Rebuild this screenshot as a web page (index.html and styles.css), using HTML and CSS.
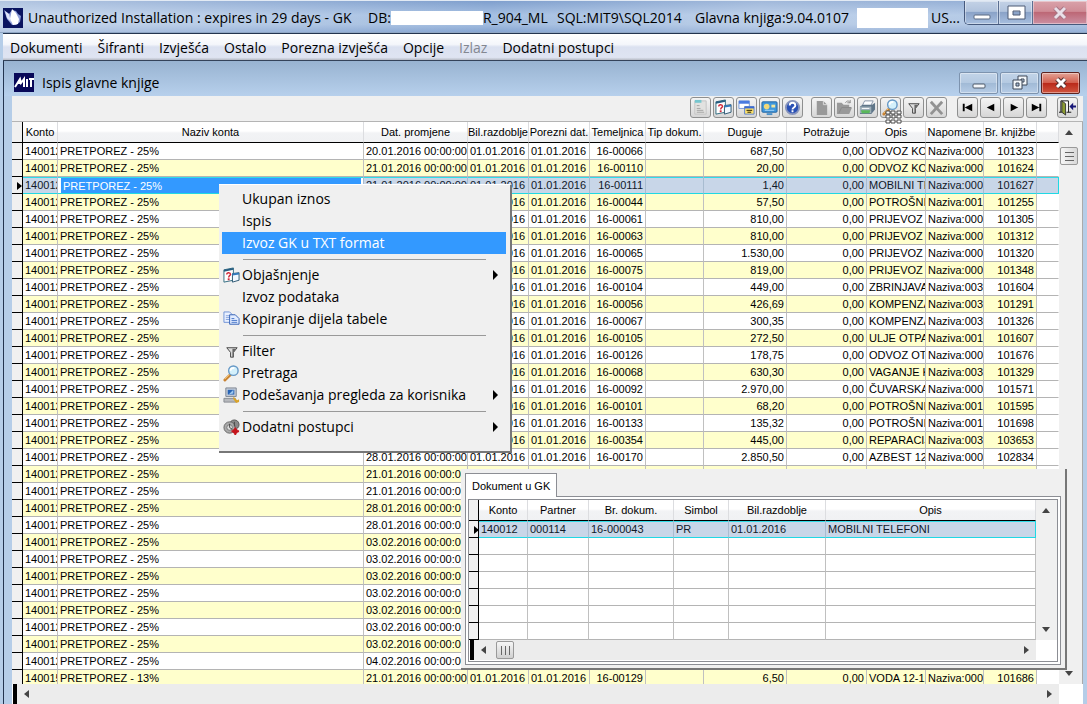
FILE: index.html
```html
<!DOCTYPE html>
<html lang="hr">
<head>
<meta charset="utf-8">
<title>Ispis glavne knjige</title>
<link rel="stylesheet" href="styles.css">
</head>
<body>
<div class="app">
  <header class="titlebar">
    <svg class="app-icon" viewBox="0 0 20 20" aria-hidden="true"><rect width="20" height="20" fill="#0a1460"/><path d="M1 2l5 4 3-4 4 1 2 3 3 2-1 6-4 3H9L4 11z" fill="#8c9cd8"/><path d="M9 1l4 4 3 6-1 5-5 1-3-6 1-5z" fill="#fff"/><path d="M2 3l4 3 2 8-4-4z" fill="#dfe5fa"/></svg>
    <span class="title-main">Unauthorized Installation : expires in 29 days - GK</span>
    <span class="title-db">DB:<i class="mask"></i>R_904_ML</span>
    <span class="title-sql">SQL:MIT9\SQL2014</span>
    <span class="title-ver">Glavna knjiga:9.04.0107</span>
    <i class="mask tall"></i>
    <span class="title-user">US...</span>
    <div class="win-buttons">
      <button aria-label="Minimize"><svg viewBox="0 0 28 18" width="28" height="18"><rect x="6" y="11" width="16" height="4" rx="1" fill="#fff" stroke="#5b6b83"/></svg></button>
      <button aria-label="Maximize"><svg viewBox="0 0 28 18" width="28" height="18"><path d="M6 2h17v13H6zM11 7v4h7V7z" fill="#fff" fill-rule="evenodd" stroke="#4c5b74"/></svg></button>
      <button class="close" aria-label="Close"><svg viewBox="0 0 18 16" width="18" height="16"><path d="M4 3l10 10M14 3L4 13" stroke="#a87686" stroke-width="5"/><path d="M4 3l10 10M14 3L4 13" stroke="#e9dfe8" stroke-width="3"/></svg></button>
    </div>
  </header>
  <nav class="menubar">
    <button>Dokumenti</button><button>Šifranti</button><button>Izvješća</button><button>Ostalo</button><button>Porezna izvješća</button><button>Opcije</button><button disabled>Izlaz</button><button>Dodatni postupci</button>
  </nav>
  <main class="mdi">
    <div class="caption">
      <svg class="mit-icon" viewBox="0 0 20 19" aria-hidden="true"><rect width="20" height="19" fill="#080858"/><path d="M1 14l5-8 1 4 3-4v8M4 10h4M13 6v8M15 6h5M17 6v8" stroke="#fff" stroke-width="2" fill="none"/></svg>
      <h1>Ispis glavne knjige</h1>
      <div class="mdi-buttons">
        <button aria-label="Minimize"><svg viewBox="0 0 16 14" width="16" height="14"><rect x="2" y="8" width="12" height="4" rx="1" fill="#f3f6fa" stroke="#4e5a6b"/></svg></button>
        <button aria-label="Restore"><svg viewBox="0 0 16 16" width="16" height="16"><path d="M6 1h9v9H6z" fill="#f4f7fa" stroke="#3d4756"/><path d="M9 4h3v3H9z" fill="#b8c8dc" stroke="#3d4756"/><path d="M1 5h9v9H1z" fill="#f4f7fa" stroke="#3d4756"/><path d="M4 8h3v3H4z" fill="#a9bdd6" stroke="#3d4756"/></svg></button>
        <button class="close" aria-label="Close"><svg viewBox="0 0 16 14" width="16" height="14"><path d="M4 3l8 8M12 3l-8 8" stroke="#54302f" stroke-width="5"/><path d="M4 3l8 8M12 3l-8 8" stroke="#fff" stroke-width="3"/></svg></button>
      </div>
    </div>
    <div class="toolbar" role="toolbar">
      <div class="tools">
        <button aria-label="Svojstva"><svg viewBox="0 0 18 18"><path d="M3 2h12v14H3z" fill="#e2e2e0" stroke="#c4c4c4"/><path d="M3 1h7v3H3z" fill="#76c6cf"/><path d="M5 7h3M5 10h4M5 12h7M5 14h8" stroke="#a2a2a2"/></svg></button>
        <button aria-label="Objašnjenje"><svg viewBox="0 0 18 18"><use href="#i-help-win"/></svg></button>
        <button aria-label="Prozori"><svg viewBox="0 0 18 18"><path d="M1 2h11v8H1z" fill="#fff" stroke="#7396d8"/><path d="M1 2h11v3H1z" fill="#4a7be0"/><path d="M7 8h10v8H7z" fill="#ffe36b" stroke="#5b82d0"/><path d="M7 8h10v2H7z" fill="#3a68d0"/><path d="M9 12h6M10 14h4" stroke="#201a00"/></svg></button>
        <button aria-label="Zaslon"><svg viewBox="0 0 18 18"><rect x="1" y="3" width="16" height="11" rx="1" fill="#3f97dc" stroke="#23639f"/><circle cx="6" cy="8" r="3" fill="#f1d879"/><path d="M11 6h4v3h-4z" fill="#f1e6a0"/><path d="M4 12h10" stroke="#a4d4f6"/><path d="M6 16h6" stroke="#4a90c8" stroke-width="2"/></svg></button>
        <button aria-label="Pomoć"><svg viewBox="0 0 18 18"><circle cx="9" cy="9" r="7" fill="#2a50b4" stroke="#8794bc" stroke-width="2"/><path d="M6 7c0-4 6-4 6 0 0 2-3 2-3 4M9 12v2" stroke="#fff" stroke-width="2" fill="none"/></svg></button>
      </div>
      <div class="tools">
        <button aria-label="Novo"><svg viewBox="0 0 18 18"><path d="M4 2h7l4 4v11H4z" fill="#999"/><path d="M11 2v4h4" fill="none" stroke="#ddd"/></svg></button>
        <button aria-label="Otvori"><svg viewBox="0 0 18 18"><path d="M1 4h5l2 2h6v3h3l-3 7H1z" fill="#999"/><path d="M3 15l3-6h10M10 4c2-3 4-2 5 0M15 1v3h-3" stroke="#888" fill="none"/></svg></button>
        <button aria-label="Ispis"><svg viewBox="0 0 18 18"><path d="M6 2h9l-3 6H3z" fill="#fafcff" stroke="#8795a8"/><path d="M1 8l3-2h10l3-2v7l-4 5H1z" fill="#5f7689"/><path d="M1 8h12v7H1z" fill="#9cadb8"/><path d="M2 12h10l-1 3H3z" fill="#5ab85a"/><path d="M3 10h8M6 4h6" stroke="#fff"/></svg></button>
        <button aria-label="Pretraga"><svg viewBox="0 0 18 18"><use href="#i-search"/></svg></button>
        <button aria-label="Filter"><svg viewBox="0 0 18 18"><use href="#i-filter"/></svg></button>
        <button aria-label="Obriši"><svg viewBox="0 0 18 18"><path d="M3 3l12 13M15 3L3 16" stroke="#929292" stroke-width="3"/></svg></button>
      </div>
      <div class="tools nav">
        <button aria-label="Prvi"><svg viewBox="0 0 18 18"><path d="M4 5h2v8H4zM14 5v8L6 9z"/></svg></button>
        <button aria-label="Prethodni"><svg viewBox="0 0 18 18"><path d="M13 5v8L5 9z"/></svg></button>
        <button aria-label="Sljedeći"><svg viewBox="0 0 18 18"><path d="M6 5v8l8-4z"/></svg></button>
        <button aria-label="Zadnji"><svg viewBox="0 0 18 18"><path d="M12 5h2v8h-2zM4 5v8l8-4z"/></svg></button>
      </div>
      <div class="tools exit">
        <button aria-label="Izlaz"><svg viewBox="0 0 18 18"><path d="M2 14V2h8v12" fill="#fff" stroke="#111"/><path d="M3 2l4 3v12l-4-3z" fill="#8c9c32" stroke="#333"/><path d="M0 14h3M8 14h5" stroke="#111"/><path d="M11 8l4-4v3h3v2h-3v3z" fill="#181878"/></svg></button>
      </div>
      <svg class="drag-cursor" viewBox="0 0 17 14" aria-hidden="true"><path d="M1 1h4v3H1zM6 1h4v3H6zM12 1h4v3h-4zM1 5h4v3H1zM7 5h3v3H7zM12 5h4v3h-4zM1 10h4v3H1zM6 10h4v3H6zM12 10h4v3h-4z" fill="#fff" stroke="#4a4a4a"/></svg>
    </div>
    <div class="ledger">
      <div class="sheet">
        <table class="grid">
          <colgroup><col class="c-mark"><col class="c-konto"><col><col class="c-date"><col class="c-bil"><col class="c-bil"><col class="c-tem"><col class="c-tip"><col class="c-dug"><col class="c-pot"><col class="c-opis"><col class="c-tip"><col class="c-br"><col class="c-rest"></colgroup>
          <thead><tr><th></th><th>Konto</th><th>Naziv konta</th><th>Dat. promjene</th><th>Bil.razdoblje</th><th>Porezni dat.</th><th>Temeljnica</th><th>Tip dokum.</th><th>Duguje</th><th>Potražuje</th><th>Opis</th><th>Napomene</th><th>Br. knjižbe</th><th></th></tr></thead>
          <tbody id="rows"></tbody>
        </table>
      </div>
      <div class="vbar"><i class="tri up"></i><i class="thumb"></i><i class="tri down"></i></div>
      <div class="hbar"><i class="tri left"></i><i class="tri right"></i></div>
    </div>

    <section class="details">
      <div class="tabs"><button class="tab">Dokument u GK</button></div>
      <div class="tab-page"><div class="frame">
        <table class="grid doc">
          <colgroup><col class="d-mark"><col class="d-konto"><col class="d-part"><col class="d-br"><col class="d-sim"><col class="d-bil"><col></colgroup>
          <thead><tr><th></th><th>Konto</th><th>Partner</th><th>Br. dokum.</th><th>Simbol</th><th>Bil.razdoblje</th><th>Opis</th></tr></thead>
          <tbody>
            <tr class="current"><td class="mark"><i class="pointer"></i></td><td>140012</td><td>000114</td><td>16-000043</td><td>PR</td><td>01.01.2016</td><td>MOBILNI TELEFONI</td></tr>
            <tr><td class="mark"></td><td></td><td></td><td></td><td></td><td></td><td></td></tr>
            <tr><td class="mark"></td><td></td><td></td><td></td><td></td><td></td><td></td></tr>
            <tr><td class="mark"></td><td></td><td></td><td></td><td></td><td></td><td></td></tr>
            <tr><td class="mark"></td><td></td><td></td><td></td><td></td><td></td><td></td></tr>
            <tr><td class="mark"></td><td></td><td></td><td></td><td></td><td></td><td></td></tr>
            <tr><td class="mark"></td><td></td><td></td><td></td><td></td><td></td><td></td></tr>
          </tbody>
        </table>
        <div class="vbar"><i class="tri up"></i><i class="tri down"></i></div>
        <div class="hbar"><i class="tri left"></i><i class="thumb"></i><i class="tri right"></i></div>
      </div></div>
    </section>
  </main>

  <div class="context-menu" role="menu">
    <button role="menuitem">Ukupan iznos</button>
    <button role="menuitem">Ispis</button>
    <button role="menuitem" class="active">Izvoz GK u TXT format</button>
    <hr>
    <button role="menuitem" class="sub"><svg viewBox="0 0 18 18"><use href="#i-help-win"/></svg>Objašnjenje</button>
    <button role="menuitem">Izvoz podataka</button>
    <button role="menuitem"><svg viewBox="0 0 18 18"><path d="M1 1h6l3 3v8H1z" fill="#eaf1ff" stroke="#6f92d6"/><path d="M3 5h5M3 7h5M3 9h5" stroke="#85a3dd"/><path d="M7 4h6l4 4v6H7z" fill="#e2ecff" stroke="#3461b4"/><path d="M9 8h3M9 10h6M9 12h6" stroke="#4675c8"/></svg>Kopiranje dijela tabele</button>
    <hr>
    <button role="menuitem"><svg viewBox="0 0 18 18"><use href="#i-filter"/></svg>Filter</button>
    <button role="menuitem"><svg viewBox="0 0 18 18"><use href="#i-search"/></svg>Pretraga</button>
    <button role="menuitem" class="sub"><svg viewBox="0 0 18 18"><path d="M3 1h11v9H3z" fill="#c4ccd8" stroke="#7b8490"/><path d="M5 3h7v5H5z" fill="#2863b4"/><path d="M6 8l5-5v4z" fill="#9cc8f0"/><path d="M1 12h12l1 4H1z" fill="#b7b9bd" stroke="#868a90"/><path d="M11 10l4 4 2-1v3l-3 1-3-4z" fill="#d9a32a"/></svg>Podešavanja pregleda za korisnika</button>
    <hr>
    <button role="menuitem" class="sub"><svg viewBox="0 0 18 18"><circle cx="12" cy="6" r="5" fill="#888" stroke="#555"/><circle cx="7" cy="9" r="6" fill="#aaa" stroke="#666"/><circle cx="7" cy="9" r="3" fill="#ddd" stroke="#777"/><path d="M7 5v4l3 2M12 3v5" stroke="#444" fill="none"/><path d="M13 9v8M9 13h8M11 11l4 4M15 11l-4 4" stroke="#c5141c" stroke-width="2"/></svg>Dodatni postupci</button>
  </div>
</div>

<svg class="sprites" aria-hidden="true">
  <symbol id="i-help-win" viewBox="0 0 18 18"><path d="M1 3l10-2v13L1 16z" fill="#fff" stroke="#2f6a80"/><path d="M1 3l10-2v2L1 5z" fill="#265c80"/><path d="M4 8c0-3 4-2 4 0 0 1-2 1-2 3" stroke="#d02838" fill="none" stroke-width="1.5"/><path d="M5 12h2v2H5z" fill="#d02838"/><path d="M10 7l7-1v8l-7 2z" fill="#f2f8ff" stroke="#2a5570"/><path d="M10 7l7-1v2l-7 1z" fill="#3179bd"/></symbol>
  <symbol id="i-search" viewBox="0 0 18 18"><path d="M2 16l6-6" stroke="#c98232" stroke-width="3" stroke-linecap="round"/><path d="M2 15l5-5" stroke="#f5c776"/><circle cx="11" cy="6" r="5" fill="#d4f0fb" stroke="#6698c6" stroke-width="1.5"/><path d="M8 6c0-2 2-3 4-3" fill="none" stroke="#fff" stroke-width="2"/></symbol>
  <symbol id="i-filter" viewBox="0 0 18 18"><path d="M4 5h11l-4 5v5H8v-5z" fill="#ddd" stroke="#444"/><path d="M10 6h4l-3 4v5h-1z" fill="#666"/></symbol>
</svg>
<script src="rows.js"></script>
</body>
</html>
```

FILE: rows.js
```js
const P = '01.01.2016';
const data = [
  ['20', '16-00066', '687,50', 'ODVOZ KO', '000', '101323'],
  ['21', '16-00110', '20,00', 'ODVOZ KO', '000', '101624'],
  ['21', '16-00111', '1,40', 'MOBILNI TE', '000', '101627'],
  ['', '16-00044', '57,50', 'POTROŠNI', '001', '101255'],
  ['', '16-00061', '810,00', 'PRIJEVOZ', '000', '101305'],
  ['', '16-00063', '810,00', 'PRIJEVOZ A', '000', '101312'],
  ['', '16-00065', '1.530,00', 'PRIJEVOZ', '000', '101320'],
  ['', '16-00075', '819,00', 'PRIJEVOZ', '000', '101348'],
  ['', '16-00104', '449,00', 'ZBRINJAVA', '003', '101604'],
  ['', '16-00056', '426,69', 'KOMPENZA', '003', '101291'],
  ['', '16-00067', '300,35', 'KOMPENZA', '003', '101326'],
  ['', '16-00105', '272,50', 'ULJE OTPA', '001', '101607'],
  ['', '16-00126', '178,75', 'ODVOZ OT', '000', '101676'],
  ['', '16-00068', '630,30', 'VAGANJE K', '003', '101329'],
  ['', '16-00092', '2.970,00', 'ČUVARSKA', '000', '101571'],
  ['', '16-00101', '68,20', 'POTROŠNI', '001', '101595'],
  ['', '16-00133', '135,32', 'POTROŠNI', '001', '101698'],
  ['', '16-00354', '445,00', 'REPARACIJ', '003', '103653'],
  ['28', '16-00170', '2.850,50', 'AZBEST 12', '000', '102834'],
  ['21'], ['21'], ['28'], ['28'],
  ['03'], ['03'], ['03'], ['03'], ['03'], ['03'], ['03'], ['04'],
  ['21', '16-00129', '6,50', 'VODA 12-15', '000', '101686']
];

const body = document.getElementById('rows');
data.forEach(([day, voucher, debit, text, note, entry], i) => {
  const month = day === '03' || day === '04' ? '02' : '01';
  const last = i === data.length - 1;
  const full = Boolean(voucher);
  const current = i === 2;
  const name = last ? 'PRETPOREZ - 13%' : 'PRETPOREZ - 25%';
  const cells = [
    last ? '140015' : '140012',
    current ? '' : name,
    day ? `${day}.${month}.2016 00:00:00` : '',
    full ? P : '',
    full ? P : '',
    voucher || '',
    '',
    debit || '',
    full ? '0,00' : '',
    text || '',
    full ? 'Naziva:' + note : '',
    entry || '',
    ''
  ];
  const tr = document.createElement('tr');
  if (current) tr.className = 'current';
  const mark = tr.insertCell();
  mark.className = 'mark';
  if (current) mark.innerHTML = '<i class="pointer"></i>';
  cells.forEach((value, c) => {
    const td = tr.insertCell();
    td.textContent = value;
    if ([5, 7, 8, 11].includes(c)) td.className = 'num';
    if (c === 12) td.className = 'rest';
    if (current && c === 1) {
      td.className = 'edit';
      const input = document.createElement('input');
      input.value = name;
      input.setAttribute('aria-label', 'Naziv konta');
      td.append(input);
    }
  });
  body.append(tr);
});
```

FILE: styles.css
```css
* { box-sizing: border-box; }
body {
  margin: 0;
  font: 11px/16px "Liberation Sans", Arial, sans-serif;
  color: #000;
}
button { font: inherit; color: inherit; margin: 0; padding: 0; border: 0; background: none; text-align: left; }
svg { display: block; }
.sprites { position: absolute; width: 0; height: 0; }
.app {
  position: relative;
  display: flex;
  flex-direction: column;
  height: 100vh;
  overflow: hidden;
  background: #b5cde8;
}

/* Title bar */
.titlebar {
  flex: none;
  display: flex;
  align-items: center;
  height: 33px;
  padding: 2px 0 0 3px;
  border-top: 1px solid #e2eaf4;
  border-bottom: 1px solid #8fa6c4;
  background: linear-gradient(90deg, #ffffff66, #ffffff22 30%, #ffffff00 45%, #ffffff44 70%, #ffffff22), linear-gradient(#7f9fcd, #a6c0e2 45%, #a3bddf 75%, #86a5d2);
  font: 14px/20px "Open Sans", "Noto Sans", sans-serif;
  white-space: nowrap;
}
.app-icon { width: 20px; height: 20px; margin-right: 5px; }
.title-main { width: 340px; }
.title-db { display: flex; align-items: center; width: 189px; }
.title-sql { width: 138px; }
.title-ver { width: 162px; }
.mask { width: 92px; height: 14px; background: #fff; }
.mask.tall { width: 71px; height: 20px; margin-right: 3px; }
.win-buttons {
  display: flex;
  align-self: flex-start;
  margin: -2px 0 0 auto;
  border: 1px solid #46597c;
  border-width: 0 0 1px 1px;
  border-radius: 0 0 0 5px;
  overflow: hidden;
}
.win-buttons button {
  display: grid;
  place-items: center;
  width: 34px;
  height: 23px;
  border-right: 1px solid #5b6f92;
  background: linear-gradient(#c3d2e6, #b1c3dd 45%, #8aa3c8 50%, #a8bfdf);
  box-shadow: inset 0 0 0 1px #ffffff66;
}
.win-buttons .close { width: 54px; border: 0; background: linear-gradient(#d9a2aa, #cf8c96 45%, #bd6876 50%, #cb8fa2); }

/* Main menu */
.menubar {
  flex: none;
  display: flex;
  align-items: center;
  gap: 15px;
  height: 28px;
  margin-left: 3px;
  padding: 1px 0 0 7px;
  border-top: 1px solid #23344f;
  border-bottom: 1px solid #34435a;
  background: linear-gradient(#fff, #f4f6fb 40%, #dbe1f0 50%, #dfe4f2 90%, #b6bac4);
  font: 14px/20px "Open Sans", "Noto Sans", sans-serif;
  white-space: nowrap;
}
.menubar button:disabled { color: #838791; }

/* Document window */
.mdi {
  position: relative;
  flex: 1;
  min-height: 0;
  display: flex;
  flex-direction: column;
  margin-left: 3px;
  padding: 0 4px 0 8px;
  border-left: 1px solid #23344f;
}
.caption {
  flex: none;
  display: flex;
  align-items: center;
  gap: 8px;
  height: 35px;
  margin: 0 -4px 0 -8px;
  padding: 8px 7px 0 10px;
  background: linear-gradient(#98b3d1, #b7d0ec);
}
.mit-icon { width: 20px; height: 19px; }
.caption h1 { margin: 0; font: 14px/20px "Open Sans", "Noto Sans", sans-serif; }
.mdi-buttons { display: flex; gap: 2px; margin-left: auto; }
.mdi-buttons button {
  display: grid;
  place-items: center;
  width: 39px;
  height: 22px;
  border: 1px solid #7d93ae;
  border-radius: 2px;
  background: linear-gradient(#c2d4e8, #b4c9e1 50%, #a1bad6 52%, #b6cce6);
  box-shadow: inset 0 0 0 1px #ffffff66;
}
.mdi-buttons .close { border-color: #5c2320; background: linear-gradient(#e3a396, #d3604f 48%, #ba2a1a 52%, #d0553f); }

.toolbar {
  position: relative;
  flex: none;
  display: flex;
  justify-content: flex-end;
  gap: 8px;
  height: 26px;
  padding: 1px 5px 0 0;
  background: #f0f0f0;
  border-bottom: 1px solid #b4b4b4;
}
.tools { display: flex; gap: 2px; }
.tools.nav { margin-left: 2px; }
.tools.exit { margin-left: 2px; }
.tools button {
  display: grid;
  place-items: center;
  width: 21px;
  height: 21px;
  border: 1px solid #8e8f8f;
  border-radius: 3px;
  background: linear-gradient(#f4f4f4, #e6e6e6 50%, #d6d6d6);
}
.tools svg { width: 17px; height: 17px; }
.drag-cursor { position: absolute; right: 181px; top: 14px; width: 17px; height: 14px; z-index: 1; }

/* Ledger grid */
.ledger {
  flex: 1;
  min-height: 0;
  display: grid;
  grid-template-columns: minmax(0, 1fr) 24px;
  grid-template-rows: minmax(0, 1fr) 20px;
  background: #fff;
}
.sheet { overflow: hidden; }
.grid { width: 100%; table-layout: fixed; border-collapse: separate; border-spacing: 0; }
.c-mark { width: 11px; }
.c-konto { width: 35px; }
.c-date { width: 104px; }
.c-bil { width: 61px; }
.c-tem { width: 56px; }
.c-tip { width: 58px; }
.c-dug { width: 83px; }
.c-pot { width: 80px; }
.c-opis { width: 59px; }
.c-br { width: 53px; }
.c-rest { width: 22px; }
.grid th {
  height: 21px;
  padding: 0;
  font-weight: normal;
  white-space: nowrap;
  overflow: hidden;
  border-right: 1px solid #dcdde0;
  border-bottom: 1px solid #000;
  background: linear-gradient(#fff 45%, #f2f3f5 55%, #f0f1f3);
}
.grid td {
  height: 17px;
  padding: 0 2px;
  line-height: 16px;
  white-space: nowrap;
  overflow: hidden;
  border-right: 1px solid #c0c0c0;
  border-bottom: 1px solid #b4b4b4;
}
.grid th:first-child, .grid td.mark { padding: 0; border-right-color: #000; background: #f0f0f0; }
.grid td.mark { border-bottom-color: #000; }
.grid td.num { text-align: right; }
#rows tr:nth-child(even) td:not(.mark, .rest) { background: #ffc; }
.grid td.rest { border-right-color: #fff; }
.grid .current td:not(.mark) {
  color: #101828;
  background: linear-gradient(#30dce8 0 1px, #c8d6e8 1px);
  border-bottom-color: #20d8e4;
  border-right-color: #a8bcd0;
}
.grid .current td:not(.mark):last-child { border-right-color: #20d8e4; }
.grid .current td.edit { padding: 1px 2px 0 1px; background: linear-gradient(#30dce8 0 1px, #fff 1px); }
.edit input {
  display: block;
  width: 100%;
  height: 15px;
  padding: 0 2px;
  border: 0;
  border-left: 2px solid #fff;
  background: #39f;
  color: #fff;
  font: inherit;
}
.pointer { display: block; width: 0; margin: 2px 0 0 5px; border: 4px solid transparent; border-left: 5px solid #000; border-right: 0; }

/* Scroll bars */
.vbar { display: flex; flex-direction: column; align-items: center; background: #f0f0f0; border-right: 1px solid #aaa; padding: 8px 3px 8px 0; }
.hbar { display: flex; align-items: center; background: #ececec; border-left: 4px solid #000; margin-left: 1px; padding: 0 7px; }
.tri { width: 0; height: 0; border: 4px solid transparent; }
.tri.up { border-bottom: 5px solid #444; border-top: 0; }
.tri.down { border-top: 5px solid #444; border-bottom: 0; margin-top: auto; }
.tri.left { border-right: 5px solid #444; border-left: 0; }
.tri.right { border-left: 5px solid #444; border-right: 0; margin-left: auto; }
.thumb { border: 1px solid #999; border-radius: 2px; }
.vbar .thumb { width: 18px; height: 18px; margin-top: 12px; background: repeating-linear-gradient(#666 0 1px, transparent 1px 4px) 4px 4px / 9px 9px no-repeat, linear-gradient(90deg, #f6f6f6, #d8d8d8); }
.hbar .thumb { width: 18px; height: 18px; margin-left: 10px; background: repeating-linear-gradient(90deg, #666 0 1px, transparent 1px 4px) 4px 4px / 9px 9px no-repeat, linear-gradient(#f6f6f6, #d0d0d0); }

/* Document panel */
.details {
  position: absolute;
  left: 457px;
  right: 20px;
  top: 408px;
  padding: 4px 4px 3px;
  background: #f0f0f0;
  border-right: 2px solid #777;
  border-bottom: 2px solid #777;
}
.tabs { display: flex; }
.tab {
  position: relative;
  z-index: 1;
  height: 24px;
  margin-bottom: -1px;
  padding: 0 6px;
  border: 1px solid #8c8e94;
  border-bottom: 0;
  background: #fff;
}
.tab-page { padding: 2px; border: 1px solid #8c8e94; background: #fff; }
.frame {
  display: grid;
  grid-template-columns: minmax(0, 1fr) 21px;
  grid-template-rows: auto 20px;
  border: 1px solid #8c8e94;
  padding-bottom: 1px;
}
.d-mark { width: 10px; }
.d-konto { width: 49px; }
.d-part { width: 61px; }
.d-br { width: 85px; }
.d-sim { width: 55px; }
.d-bil { width: 97px; }
.frame .vbar { border-right: 0; padding-right: 2px; }

/* Context menu */
.context-menu {
  position: absolute;
  left: 219px;
  top: 184px;
  width: 293px;
  padding: 3px 4px 13px 3px;
  background: #f0f0f0;
  border-top: 1px solid #fff;
  border-right: 2px solid #777;
  border-bottom: 2px solid #777;
  font: 14px/22px "Open Sans", "Noto Sans", sans-serif;
}
.context-menu button {
  display: flex;
  align-items: center;
  width: 100%;
  height: 22px;
  padding-left: 20px;
  white-space: nowrap;
}
.context-menu button svg { width: 17px; height: 17px; margin: 0 2px 0 -19px; }
.context-menu .active { background: #39f; color: #fff; }
.context-menu .sub::after { content: ""; margin: 0 8px 0 auto; border: 5px solid transparent; border-left-color: #000; border-right: 0; }
.context-menu hr { height: 1px; margin: 5px 20px 4px 21px; border: 0; background: #999; }
```
